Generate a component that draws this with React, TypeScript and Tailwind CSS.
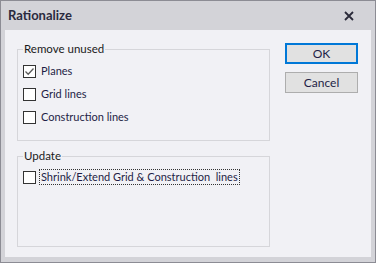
import { useState } from 'react';

const font = { fontFamily: 'Lato, "Noto Sans", sans-serif' };

const Check = ({ checked, label, focus, onToggle }: { checked: boolean; label: string; focus?: boolean; onToggle: () => void }) => (
  <div className="flex items-center h-[14px] cursor-default" onClick={onToggle}>
    <div className="w-[13px] h-[13px] border border-[#333333] bg-white flex items-center justify-center shrink-0">
      {checked && (
        <svg width="11" height="11" viewBox="0 0 11 11">
          <path d="M1.5 5.5 L4.2 8.2 L9.5 2.5" fill="none" stroke="#5a5a5a" strokeWidth="1.3" />
        </svg>
      )}
    </div>
    <span
      className={`ml-[4px] text-[11px] leading-[14px] text-[#1e1e46] px-[1px] whitespace-pre ${focus ? 'outline outline-1 outline-dotted outline-[#333]' : ''}`}
    >
      {label}
    </span>
  </div>
);

const App = () => {
  const [planes, setPlanes] = useState(true);
  const [grid, setGrid] = useState(false);
  const [constr, setConstr] = useState(false);
  const [shrink, setShrink] = useState(false);

  return (
    <div style={font} className="w-[376px] h-[263px] border border-[#8c8c94] bg-[#d3d3d8] flex flex-col select-none">
      <div className="h-[29px] flex items-center justify-between pl-[7px] pr-[21px]">
        <span className="text-[13px] font-bold text-[#2a2a3e]">Rationalize</span>
        <svg width="10" height="10" viewBox="0 0 10 10">
          <path d="M1 1 L9 9 M9 1 L1 9" stroke="#2a2a3a" strokeWidth="1.8" />
        </svg>
      </div>
      <div className="mx-[4px] h-[227px] bg-[#f1f1f5] flex pl-[12px] pt-[13px]">
        <div className="w-[253px] flex flex-col gap-[15px] pt-[6px]">
          <div className="relative h-[92px] border border-[#d6d6da] pl-[5px] pt-[14px] flex flex-col gap-[9px]">
            <span className="absolute left-[5px] top-[-9px] px-[1px] bg-[#f1f1f5] text-[11.5px] leading-[16px] text-[#1a1a1a]">
              Remove unused
            </span>
            <Check checked={planes} label="Planes" onToggle={() => setPlanes(!planes)} />
            <Check checked={grid} label="Grid lines" onToggle={() => setGrid(!grid)} />
            <Check checked={constr} label="Construction lines" onToggle={() => setConstr(!constr)} />
          </div>
          <div className="relative h-[91px] border border-[#d6d6da] pl-[5px] pt-[13px]">
            <span className="absolute left-[5px] top-[-9px] px-[1px] bg-[#f1f1f5] text-[11.5px] leading-[16px] text-[#1a1a1a]">
              Update
            </span>
            <Check checked={shrink} focus label="Shrink/Extend Grid & Construction  lines" onToggle={() => setShrink(!shrink)} />
          </div>
        </div>
        <div className="ml-[15px] flex flex-col gap-[8px]">
          <button className="w-[73px] h-[21px] border-2 border-[#0078d7] bg-[#e1e1e1] text-[12px] text-[#1e1e46] flex items-center justify-center">
            OK
          </button>
          <button className="w-[73px] h-[21px] border border-[#adadad] bg-[#e1e1e1] text-[12px] text-[#1e1e46] flex items-center justify-center">
            Cancel
          </button>
        </div>
      </div>
    </div>
  );
};

export default App;
